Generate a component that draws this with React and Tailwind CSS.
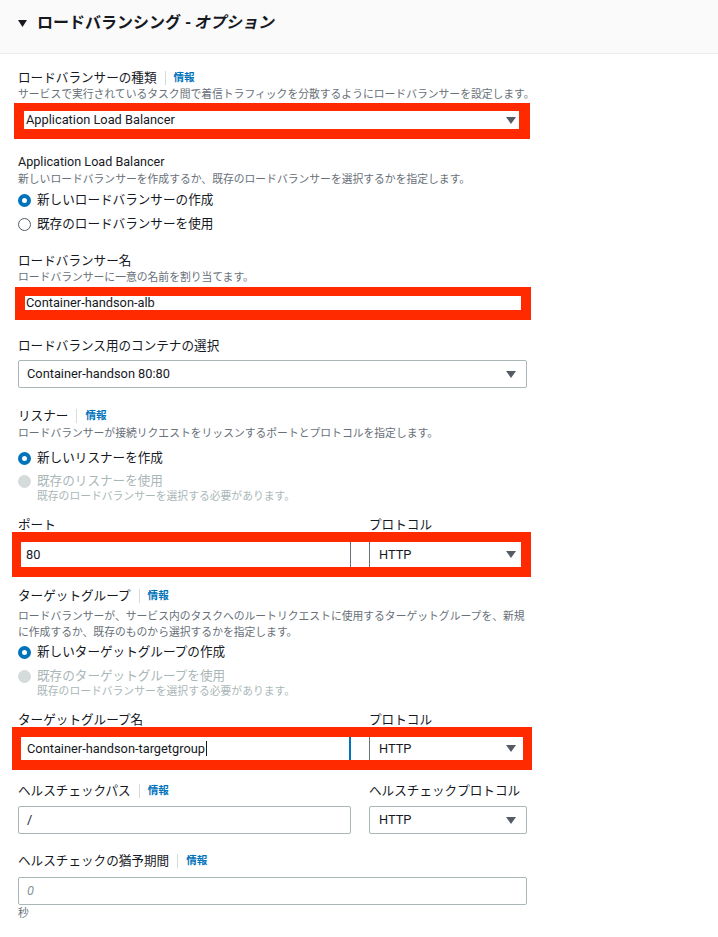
import React from "react";

const Caret = () => (
  <svg width="10" height="7" viewBox="0 0 10 7" className="shrink-0">
    <path d="M0 0h10L5 7z" fill="#545b64" />
  </svg>
);

function Label({ children, info, className = "" }) {
  return (
    <div className={"flex items-center h-[16px] text-[12.6px] leading-[16px] whitespace-nowrap " + className}>
      <span>{children}</span>
      {info && (
        <>
          <span className="mx-[8px] h-[14px] w-px bg-[#d5dbdb]" />
          <span className="text-[10.6px] font-bold text-[#0073bb]">情報</span>
        </>
      )}
    </div>
  );
}

function Desc({ children, className = "" }) {
  return (
    <div className={"text-[10.8px] leading-[14px] text-[#687078] whitespace-nowrap " + className}>
      {children}
    </div>
  );
}

function Radio({ checked, disabled, children, className = "" }) {
  let circle = "border-[1.5px] border-[#545b64] bg-white";
  if (checked) circle = "border-[4px] border-[#0073bb] bg-white";
  if (disabled) circle = "border border-[#d5dbdb] bg-[#d5dbdb]";
  return (
    <div className={"flex items-center h-[20px] gap-[6px] " + className}>
      <span className={"w-[13px] h-[13px] rounded-full " + circle} />
      <span className={"text-[12.6px] " + (disabled ? "text-[#aab7b8]" : "text-[#16191f]")}>
        {children}
      </span>
    </div>
  );
}

function App() {
  return (
    <div className="min-h-screen w-full bg-white text-[#16191f] font-['Roboto','Noto_Sans_CJK_JP',sans-serif]">
      <div className="h-[54px] bg-[#fafafa] border-b border-[#eaeded] pl-[18px] pt-[13px]">
        <div className="flex items-center h-[20px] gap-[10px] text-[16px] font-bold">
          <svg width="9" height="7" viewBox="0 0 9 7">
            <path d="M0 0h9L4.5 7z" fill="#16191f" />
          </svg>
          <span>
            ロードバランシング - <span className="inline-block -skew-x-12">オプション</span>
          </span>
        </div>
      </div>

      <div className="pl-[18px] w-[545px]">
        <Label info className="mt-[16px]">ロードバランサーの種類</Label>
        <Desc className="mt-[2px]">
          サービスで実行されているタスク間で着信トラフィックを分散するようにロードバランサーを設定します。
        </Desc>
        <div className="relative mt-[1px] -ml-[4px] w-[516px] bg-[#ff2a00] pt-[8px] pb-[10px] pl-[10px] pr-[11px]">
          <div className="h-[18px] bg-white flex items-center justify-between pl-[2px] pr-[3px] text-[12.8px]">
            <span>Application Load Balancer</span>
            <Caret />
          </div>
        </div>

        <Label className="mt-[15px]">Application Load Balancer</Label>
        <Desc className="mt-[3px]">
          新しいロードバランサーを作成するか、既存のロードバランサーを選択するかを指定します。
        </Desc>
        <Radio checked className="mt-[3px]">新しいロードバランサーの作成</Radio>
        <Radio className="mt-[4px]">既存のロードバランサーを使用</Radio>

        <Label className="mt-[19px]">ロードバランサー名</Label>
        <Desc className="mt-[2px]">ロードバランサーに一意の名前を割り当てます。</Desc>
        <div className="relative mt-[2px] -ml-[3px] w-[516px] bg-[#ff2a00] pt-[9px] pb-[10px] pl-[10px] pr-[10px]">
          <div className="h-[14px] bg-white flex items-center pl-[1px] text-[12.8px]">
            Container-handson-alb
          </div>
        </div>

        <Label className="mt-[18px]">ロードバランス用のコンテナの選択</Label>
        <div className="mt-[6px] h-[28px] w-[509px] border border-[#aab7b8] rounded-[2px] flex items-center justify-between pl-[8px] pr-[10px] text-[12.8px]">
          <span>Container-handson 80:80</span>
          <Caret />
        </div>

        <Label info className="mt-[20px]">リスナー</Label>
        <Desc className="mt-[3px]">
          ロードバランサーが接続リクエストをリッスンするポートとプロトコルを指定します。
        </Desc>
        <Radio checked className="mt-[7px]">新しいリスナーを作成</Radio>
        <Radio disabled className="mt-[3px]">既存のリスナーを使用</Radio>
        <Desc className="-mt-[1px] pl-[19px] text-[#aab7b8]">
          既存のロードバランサーを選択する必要があります。
        </Desc>

        <div className="mt-[13px] flex gap-[18px]">
          <Label className="w-[333px]">ポート</Label>
          <Label>プロトコル</Label>
        </div>
        <div className="relative -mt-[1px] -ml-[6px] w-[519px] bg-[#ff2a00] pt-[10px] pb-[10px] pl-[9px] pr-[10px]">
          <div className="h-[25px] bg-white flex text-[12.8px]">
            <div className="w-[330px] border-r border-[#687078] flex items-center pl-[5px]">80</div>
            <div className="w-[18px]" />
            <div className="flex-1 border-l border-[#687078] flex items-center justify-between pl-[9px] pr-[5px]">
              <span>HTTP</span>
              <Caret />
            </div>
          </div>
        </div>

        <Label info className="mt-[11px]">ターゲットグループ</Label>
        <div className="mt-[5px] text-[10.8px] leading-[16px] text-[#687078] whitespace-nowrap">
          ロードバランサーが、サービス内のタスクへのルートリクエストに使用するターゲットグループを、新規
          <br />
          に作成するか、既存のものから選択するかを指定します。
        </div>
        <Radio checked className="mt-[1px]">新しいターゲットグループの作成</Radio>
        <Radio disabled className="mt-[4px]">既存のターゲットグループを使用</Radio>
        <Desc className="-mt-[1px] pl-[19px] text-[#aab7b8]">
          既存のロードバランサーを選択する必要があります。
        </Desc>

        <div className="mt-[13px] flex gap-[18px]">
          <Label className="w-[333px]">ターゲットグループ名</Label>
          <Label>プロトコル</Label>
        </div>
        <div className="relative -mt-[1px] -ml-[6px] w-[520px] bg-[#ff2a00] pt-[10px] pb-[10px] pl-[9px] pr-[9px]">
          <div className="h-[23px] bg-white flex text-[12.8px]">
            <div className="w-[330px] border-r-2 border-[#0073bb] flex items-center pl-[6px]">
              <span>Container-handson-targetgroup</span>
              <span className="ml-[1px] w-px h-[15px] bg-[#16191f]" />
            </div>
            <div className="w-[18px]" />
            <div className="flex-1 border-l border-[#687078] flex items-center justify-between pl-[9px] pr-[7px]">
              <span>HTTP</span>
              <Caret />
            </div>
          </div>
        </div>

        <div className="mt-[13px] flex gap-[18px]">
          <Label info className="w-[333px]">ヘルスチェックパス</Label>
          <Label>ヘルスチェックプロトコル</Label>
        </div>
        <div className="mt-[7px] flex gap-[18px] text-[12.8px]">
          <div className="w-[333px] h-[28px] border border-[#aab7b8] rounded-[2px] flex items-center pl-[8px]">
            /
          </div>
          <div className="w-[158px] h-[28px] border border-[#aab7b8] rounded-[2px] flex items-center justify-between pl-[9px] pr-[10px]">
            <span>HTTP</span>
            <Caret />
          </div>
        </div>

        <Label info className="mt-[19px]">ヘルスチェックの猶予期間</Label>
        <div className="mt-[8px] w-[509px] h-[28px] border border-[#aab7b8] rounded-[2px] flex items-center pl-[8px] text-[12.8px] italic text-[#879596]">
          0
        </div>
        <Desc className="mt-[2px]">秒</Desc>
      </div>
    </div>
  );
}

export default App;
